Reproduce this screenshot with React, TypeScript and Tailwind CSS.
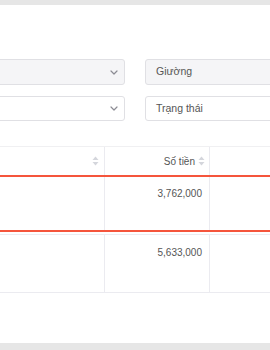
import React from "react";

function Chevron() {
  return (
    <svg width="8" height="5" viewBox="0 0 8 5" fill="none" className="shrink-0">
      <path d="M1 1l3 3 3-3" stroke="#8c8c94" strokeWidth="1.2" strokeLinecap="round" strokeLinejoin="round" />
    </svg>
  );
}

function Sort() {
  return (
    <svg width="7" height="10" viewBox="0 0 7 10" className="shrink-0">
      <path d="M3.5 0.5L6.5 4H0.5z" fill="#d4d6dc" />
      <path d="M3.5 9.5L6.5 6H0.5z" fill="#d4d6dc" />
    </svg>
  );
}

export default function App() {
  return (
    <div
      className="w-[270px] h-[350px] overflow-hidden bg-white flex flex-col text-[#5a5a5a]"
      style={{ fontFamily: '"Liberation Sans", Arial, sans-serif' }}
    >
      <div className="h-[5px] bg-[#e6e6e6] shrink-0" />
      <div className="h-[54px] shrink-0" />
      <div className="flex flex-col gap-[11px] ml-[-100px]">
        <div className="flex gap-[20px]">
          <div className="w-[225px] shrink-0 h-[26px] rounded-[3px] border border-[#e0e0e4] bg-[#f5f5f7] flex items-center justify-end pr-[6px]">
            <Chevron />
          </div>
          <div className="w-[200px] shrink-0 h-[26px] rounded-[3px] border border-[#e0e0e4] bg-[#f5f5f7] flex items-center pl-[10px] text-[10.5px] text-[#555]">
            Giường
          </div>
        </div>
        <div className="flex gap-[20px]">
          <div className="w-[225px] shrink-0 h-[25px] rounded-[3px] border border-[#e0e0e4] bg-white flex items-center justify-end pr-[6px]">
            <Chevron />
          </div>
          <div className="w-[200px] shrink-0 h-[25px] rounded-[3px] border border-[#e0e0e4] bg-white flex items-center pl-[10px] text-[10.5px] text-[#555]">
            Trạng thái
          </div>
        </div>
      </div>
      <div className="h-[25px] shrink-0" />
      <div className="flex flex-col text-[10px]">
        <div className="h-[1px] bg-[#f0f0f2]" />
        <div className="flex h-[28px]">
          <div className="w-[105px] border-r border-[#ebebf0] flex items-center justify-end pr-[5px]">
            <Sort />
          </div>
          <div className="w-[105px] border-r border-[#ebebf0] flex items-center justify-end pr-[4px] gap-[3px] text-[#555]">
            <span>Số tiền</span>
            <Sort />
          </div>
          <div className="flex-1" />
        </div>
        <div className="flex h-[57px] border-y-2 border-[#f5553c]">
          <div className="w-[105px] border-r border-[#ebebf0]" />
          <div className="w-[105px] border-r border-[#ebebf0] flex justify-end pr-[7px] pt-[9px] text-[#555]">
            3,762,000
          </div>
          <div className="flex-1" />
        </div>
        <div className="h-[2px]" />
        <div className="flex h-[59px] border-y border-[#ebebf0]">
          <div className="w-[105px] border-r border-[#ebebf0]" />
          <div className="w-[105px] border-r border-[#ebebf0] flex justify-end pr-[7px] pt-[10px] text-[#555]">
            5,633,000
          </div>
          <div className="flex-1" />
        </div>
      </div>
      <div className="flex-1" />
      <div className="h-[7px] bg-[#e6e6e6] shrink-0" />
    </div>
  );
}
